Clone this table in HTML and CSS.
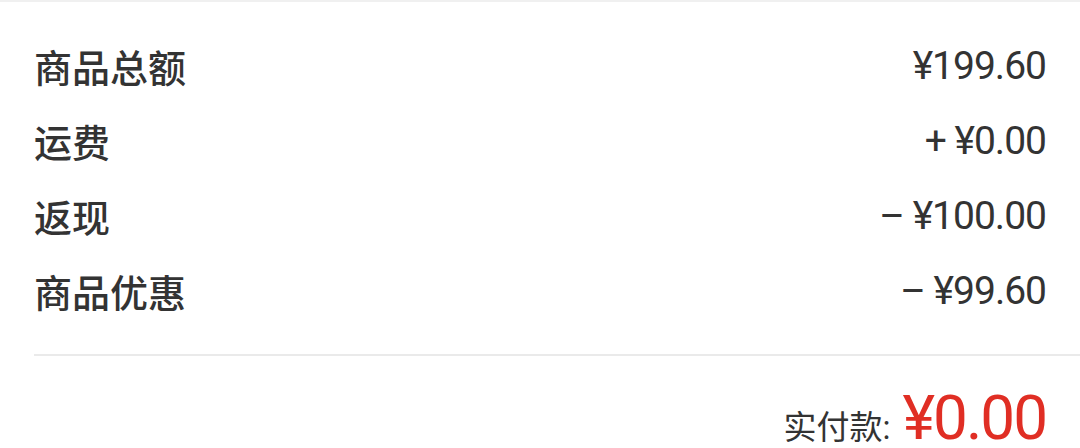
FILE: index.html
```html
<!DOCTYPE html>
<html>
<head>
  <link rel="stylesheet" href="styles.css">
</head>
<body>
<div class="summary">
  <div class="rows">
    <div class="row"><span class="label">商品总额</span><span class="value">¥199.60</span></div>
    <div class="row"><span class="label">运费</span><span class="value">+ ¥0.00</span></div>
    <div class="row"><span class="label">返现</span><span class="value">– ¥100.00</span></div>
    <div class="row"><span class="label">商品优惠</span><span class="value">– ¥99.60</span></div>
  </div>
  <div class="total">
    <span class="total-label">实付款:</span>
    <span class="total-value">¥0.00</span>
  </div>
</div>
</body>
</html>
```

FILE: styles.css
```css
body {
  margin: 0;
  background-color: #fff;
  font-family: Roboto, "Noto Sans CJK SC", sans-serif;
  color: #333;
}

.summary {
  border-top: 2px solid #f0f0f0;
  padding-left: 34px;
}

.rows {
  padding: 26px 34px 26px 0;
  border-bottom: 2px solid #eaeaea;
  display: flex;
  flex-direction: column;
}

.row {
  display: flex;
  justify-content: space-between;
  align-items: center;
  height: 75px;
}

.label {
  font-size: 38px;
  font-weight: 500;
}

.value {
  font-size: 39px;
  letter-spacing: -1px;
}

.total {
  display: flex;
  justify-content: flex-end;
  align-items: baseline;
  padding: 34px 34px 0 0;
  line-height: 0.9;
}

.total-label {
  font-size: 33px;
  margin-right: 12px;
}

.total-value {
  font-size: 62px;
  letter-spacing: -2px;
  color: #e02e24;
}
```
